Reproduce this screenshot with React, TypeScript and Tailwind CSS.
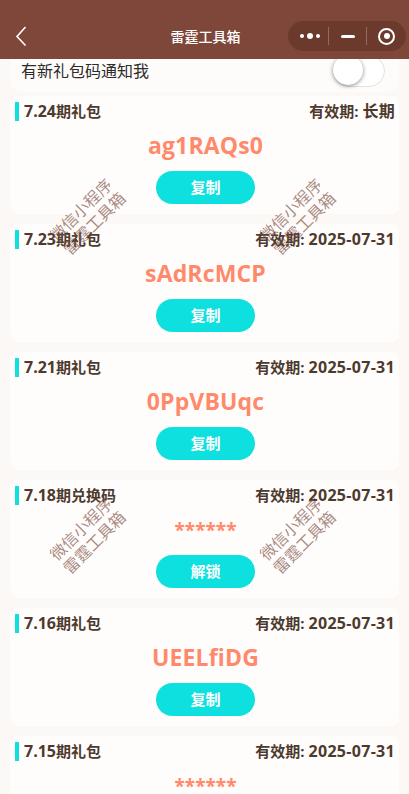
import React from "react";

const font = { fontFamily: '"Open Sans","Noto Sans CJK SC",sans-serif' };

const items = [
  { n: "7.24", t: "期礼包", d: "长期", c: "ag1RAQs0", b: "复制" },
  { n: "7.23", t: "期礼包", d: "2025-07-31", c: "sAdRcMCP", b: "复制" },
  { n: "7.21", t: "期礼包", d: "2025-07-31", c: "0PpVBUqc", b: "复制" },
  { n: "7.18", t: "期兑换码", d: "2025-07-31", c: "******", b: "解锁" },
  { n: "7.16", t: "期礼包", d: "2025-07-31", c: "UEELfiDG", b: "复制" },
  { n: "7.15", t: "期礼包", d: "2025-07-31", c: "******", b: "解锁" },
];

function Mark({ className }: { className: string }) {
  return (
    <div className={`absolute w-[100px] -rotate-45 text-center text-[16px] leading-[19px] text-[#7a4a3c]/65 pointer-events-none font-normal ${className}`}>
      微信小程序
      <br />
      雷霆工具箱
    </div>
  );
}

export default function App() {
  return (
    <div className="relative h-[794px] w-[409px] overflow-hidden bg-[#fcf8f5]" style={font}>
      <header className="relative z-10 flex h-[59px] items-end bg-[#7f4739] pb-[7px]">
        <div className="relative flex h-[32px] w-full items-center justify-center">
          <svg className="absolute left-[15px] top-[5px]" width="12" height="22" viewBox="0 0 12 22" fill="none" stroke="#fff" strokeWidth="1.6">
            <path d="M10.5 2 L2 11.5 L10.5 20.5" />
          </svg>
          <span className="ml-[2px] text-[14px] font-medium text-white">雷霆工具箱</span>
          <div className="absolute left-[288px] top-[1px] flex h-[30px] w-[118px] items-center rounded-full bg-[#6b3a2d]">
            <div className="flex w-[40px] items-center justify-center gap-[3px] pl-[3px]">
              <i className="h-[4px] w-[4px] rounded-full bg-white" />
              <i className="h-[6px] w-[6px] rounded-full bg-white" />
              <i className="h-[4px] w-[4px] rounded-full bg-white" />
            </div>
            <i className="h-[18px] w-px bg-white/25" />
            <div className="flex w-[37px] items-center justify-center">
              <i className="h-[3px] w-[14px] rounded-sm bg-white" />
            </div>
            <i className="h-[18px] w-px bg-white/25" />
            <div className="flex flex-1 items-center justify-center">
              <i className="flex h-[17px] w-[17px] items-center justify-center rounded-full border-[2px] border-white">
                <i className="h-[6px] w-[6px] rounded-full bg-white" />
              </i>
            </div>
          </div>
        </div>
      </header>

      <div className="mx-[10px] flex h-[33px] items-start justify-between rounded-b-[12px] bg-[#fefcfb] pl-[11px] pr-[14px]">
        <span className="text-[16px] leading-[24px] text-[#2f2b28]">有新礼包码通知我</span>
        <div className="relative -mt-[4px] h-[32px] w-[52px] overflow-visible rounded-full border border-[#e4e0de] bg-white">
          <div className="absolute -left-px -top-px h-[30px] w-[30px] rounded-full bg-white shadow-[0_1px_4px_rgba(0,0,0,0.45)]" />
        </div>
      </div>

      <div className="mt-[4px] flex flex-col gap-[10px] px-[10px]">
        {items.map((it) => {
          const hidden = it.c === "******";
          return (
            <div key={it.n} className="flex h-[118px] shrink-0 flex-col items-center rounded-[8px] bg-[#fffdfc]">
              <div className="mt-[5px] flex h-[20px] w-full items-center justify-between pr-[4px] text-[15px] font-bold leading-[20px] text-[#4d3a2e]">
                <div className="flex items-center">
                  <i className="ml-[5px] h-[19px] w-[4px] bg-[#0de0df]" />
                  <span className="ml-[5px]">
                    <span className="text-[16px]">{it.n}</span>
                    {it.t}
                  </span>
                </div>
                <span>
                  有效期: <span className="text-[16px] tracking-[0.3px]">{it.d}</span>
                </span>
              </div>
              <div className={`ml-[2px] mt-[7px] flex h-[34px] items-center font-bold leading-none text-[#ff8a6b] ${hidden ? "text-[19px] pt-[2px]" : "text-[23px] tracking-[0.15px]"}`}>
                {it.c}
              </div>
              <div className="ml-[2px] mt-[9px] flex h-[33px] w-[99px] items-center justify-center rounded-full bg-[#0de0df] text-[15px] font-bold text-white">
                {it.b}
              </div>
            </div>
          );
        })}
      </div>

      <Mark className="left-[38px] top-[198px]" />
      <Mark className="left-[248px] top-[198px]" />
      <Mark className="left-[38px] top-[517px]" />
      <Mark className="left-[248px] top-[517px]" />
    </div>
  );
}
